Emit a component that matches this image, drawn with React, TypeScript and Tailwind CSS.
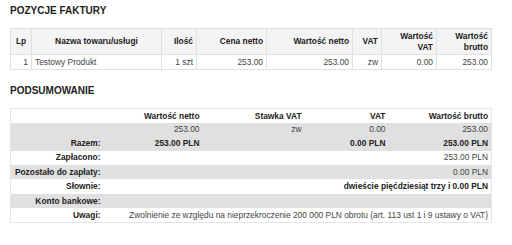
import React from "react";

const items = [
  { lp: 1, name: "Testowy Produkt", qty: "1 szt", price: "253.00", net: "253.00", vat: "zw", vatValue: "0.00", gross: "253.00" },
];

const th = "border border-[#e0e0e0] px-[3px] font-bold text-[#222] align-middle";
const td = "border border-[#e0e0e0] px-[3px] text-[#444] align-middle";

function InvoiceItems() {
  return (
    <table className="table-fixed w-[481px] border-collapse">
      <colgroup>
        <col className="w-[21px]" />
        <col className="w-[130px]" />
        <col className="w-[35px]" />
        <col className="w-[70px]" />
        <col className="w-[86px]" />
        <col className="w-[29px]" />
        <col className="w-[55px]" />
        <col className="w-[55px]" />
      </colgroup>
      <thead>
        <tr className="h-[26px] bg-[#f4f4f4]">
          <th className={`${th} text-center`}>Lp</th>
          <th className={`${th} text-center`}>Nazwa towaru/usługi</th>
          <th className={`${th} text-right`}>Ilość</th>
          <th className={`${th} text-right`}>Cena netto</th>
          <th className={`${th} text-right`}>Wartość netto</th>
          <th className={`${th} text-right`}>VAT</th>
          <th className={`${th} text-right`}>Wartość VAT</th>
          <th className={`${th} text-right`}>Wartość brutto</th>
        </tr>
      </thead>
      <tbody>
        {items.map((it) => (
          <tr key={it.lp} className="h-[15px]">
            <td className={`${td} text-right`}>{it.lp}</td>
            <td className={`${td} text-left px-[2px]`}>{it.name}</td>
            <td className={`${td} text-right`}>{it.qty}</td>
            <td className={`${td} text-right`}>{it.price}</td>
            <td className={`${td} text-right`}>{it.net}</td>
            <td className={`${td} text-right`}>{it.vat}</td>
            <td className={`${td} text-right`}>{it.vatValue}</td>
            <td className={`${td} text-right`}>{it.gross}</td>
          </tr>
        ))}
      </tbody>
    </table>
  );
}

const label = "px-[3px] text-right font-bold text-[#222] whitespace-nowrap";
const cell = "px-[3px] text-right text-[#444]";
const bold = "px-[3px] text-right font-bold text-[#222]";

function Summary() {
  return (
    <table className="table-fixed w-[481px] border-collapse border border-[#e6e6e6]">
      <colgroup>
        <col className="w-[93px]" />
        <col className="w-[99px]" />
        <col className="w-[102px]" />
        <col className="w-[84px]" />
        <col className="w-[103px]" />
      </colgroup>
      <tbody>
        <tr className="h-[14px]">
          <td className={label}></td>
          <td className={bold}>Wartość netto</td>
          <td className={bold}>Stawka VAT</td>
          <td className={bold}>VAT</td>
          <td className={bold}>Wartość brutto</td>
        </tr>
        <tr className="h-[14px] bg-[#e0e0e0]">
          <td className={label}></td>
          <td className={cell}>253.00</td>
          <td className={cell}>zw</td>
          <td className={cell}>0.00</td>
          <td className={cell}>253.00</td>
        </tr>
        <tr className="h-[14px] bg-[#e0e0e0]">
          <td className={label}>Razem:</td>
          <td className={bold}>253.00 PLN</td>
          <td className={bold}></td>
          <td className={bold}>0.00 PLN</td>
          <td className={bold}>253.00 PLN</td>
        </tr>
        <tr className="h-[14px]">
          <td className={label}>Zapłacono:</td>
          <td className={cell} colSpan={4}>253.00 PLN</td>
        </tr>
        <tr className="h-[14.5px] bg-[#e0e0e0]">
          <td className={label}>Pozostało do zapłaty:</td>
          <td className={cell} colSpan={4}>0.00 PLN</td>
        </tr>
        <tr className="h-[14.5px]">
          <td className={label}>Słownie:</td>
          <td className={bold} colSpan={4}>dwieście pięćdziesiąt trzy i 0.00 PLN</td>
        </tr>
        <tr className="h-[14.5px] bg-[#e0e0e0]">
          <td className={label}>Konto bankowe:</td>
          <td className={cell} colSpan={4}></td>
        </tr>
        <tr className="h-[14.5px]">
          <td className={label}>Uwagi:</td>
          <td className={`${cell} whitespace-nowrap`} colSpan={4}>
            Zwolnienie ze względu na nieprzekroczenie 200 000 PLN obrotu (art. 113 ust 1 i 9 ustawy o VAT)
          </td>
        </tr>
      </tbody>
    </table>
  );
}

export default function App() {
  return (
    <div className="w-[512px] h-[245px] bg-white pl-[10px] pt-[5px] font-['Liberation_Sans',Arial,sans-serif] text-[8.4px] leading-[10.5px]">
      <h2 className="text-[10px] leading-[12px] font-bold text-[#222] mb-[11px]">POZYCJE FAKTURY</h2>
      <InvoiceItems />
      <h2 className="text-[10px] leading-[12px] font-bold text-[#222] mt-[15px] mb-[11px]">PODSUMOWANIE</h2>
      <Summary />
    </div>
  );
}
